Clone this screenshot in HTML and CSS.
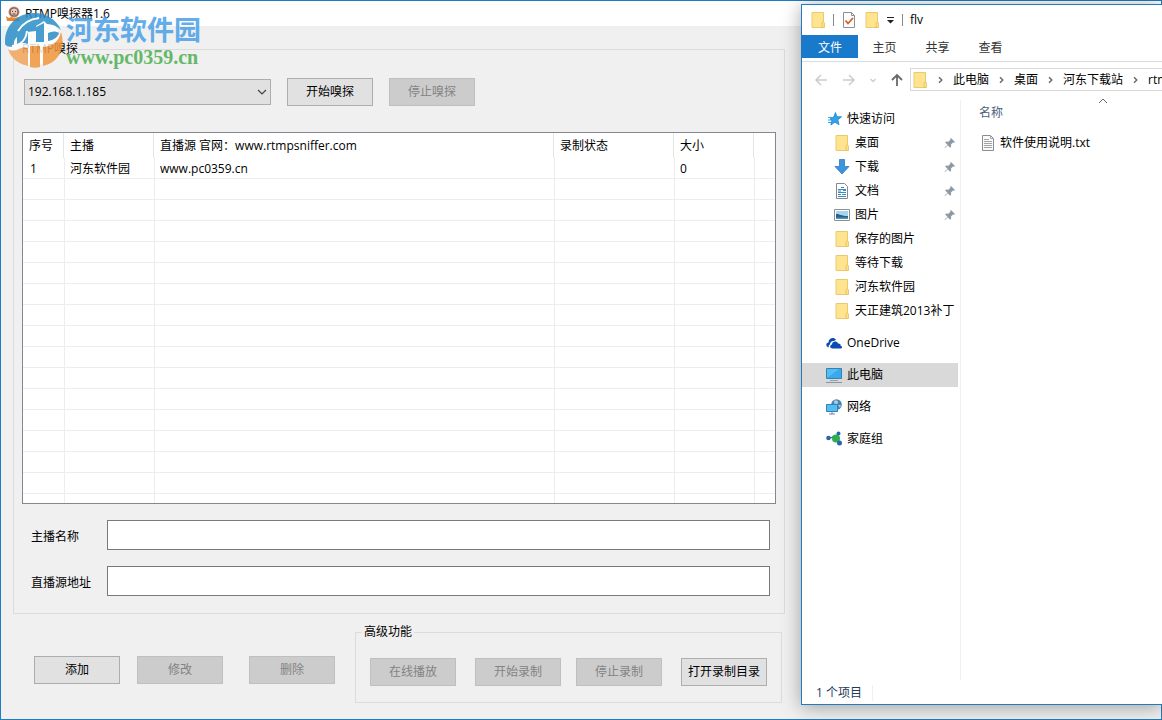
FILE: index.html
```html
<!DOCTYPE html>
<html lang="zh-CN">
<head>
    <meta charset="UTF-8">
    <meta name="viewport" content="width=device-width, initial-scale=1.0">
    <title>RTMP嗅探器1.6</title>
    <link rel="stylesheet" href="styles.css">
</head>
<body>

    <!-- shared icons -->
    <svg class="sprite" aria-hidden="true">
        <symbol id="folder" viewBox="0 0 16 16">
            <path d="M2 .5h11.500v15H2z" fill="#ffe48f" stroke="#ecc96f"/>
            <path d="M12 15.500v-4.500l1.200-1.500 1.300 1.500v4.500z" fill="#ffe08a" stroke="#e6bf58" stroke-width=".8"/>
        </symbol>
        <symbol id="pin" viewBox="0 0 12 12">
            <path d="M7 1l4 4-1 .8-1-.2-2 2 .1 2.200-1 .9-2.300-2.400L1 11l-.4-.4 2.900-2.900L1.200 5.500l.9-.9 2.300.1 2-2L6.200 1.700z" fill="#8e9aa3"/>
        </symbol>
        <symbol id="chevron" viewBox="0 0 5 8">
            <path d="M1 1.200L3.800 4 1 6.800" fill="none" stroke="#666" stroke-width="1.400"/>
        </symbol>
    </svg>

    <div class="window sniffer">
        <header class="titlebar">
            <svg class="app-icon" viewBox="0 0 16 16">
                <circle cx="9" cy="6" r="5.500" fill="#d98a4f"/>
                <circle cx="9" cy="6" r="4" fill="#f1c9a4" stroke="#5b5f8e" stroke-width="1.200"/>
                <path d="M7 5.500h1M10 5.500h1M7.500 8h3" stroke="#5b3a3a"/>
                <path d="M1 10l3 2 2-1 3 1 5-1 1 4H2z" fill="#e8862f"/>
            </svg>
            <span>RTMP嗅探器1.6</span>
        </header>

        <main class="panel">
            <fieldset class="group sniff-group">
                <legend>RTMP嗅探</legend>
                <div class="toolbar">
                    <div class="combo">
                        <select aria-label="网卡地址">
                            <option>192.168.1.185</option>
                        </select>
                        <svg viewBox="0 0 10 6"><path d="M1 1l4 4 4-4" fill="none" stroke="#444" stroke-width="1.200"/></svg>
                    </div>
                    <button type="button">开始嗅探</button>
                    <button type="button" disabled>停止嗅探</button>
                </div>

                <div class="list-view">
                    <table>
                        <colgroup>
                            <col class="col-no"><col class="col-name"><col class="col-url"><col class="col-state"><col class="col-size"><col>
                        </colgroup>
                        <thead>
                            <tr><th>序号</th><th>主播</th><th>直播源 官网：www.rtmpsniffer.com</th><th>录制状态</th><th>大小</th><th></th></tr>
                        </thead>
                        <tbody>
                            <tr><td>1</td><td>河东软件园</td><td>www.pc0359.cn</td><td></td><td>0</td><td></td></tr>
                            <tr><td></td><td></td><td></td><td></td><td></td><td></td></tr>
                            <tr><td></td><td></td><td></td><td></td><td></td><td></td></tr>
                            <tr><td></td><td></td><td></td><td></td><td></td><td></td></tr>
                            <tr><td></td><td></td><td></td><td></td><td></td><td></td></tr>
                            <tr><td></td><td></td><td></td><td></td><td></td><td></td></tr>
                            <tr><td></td><td></td><td></td><td></td><td></td><td></td></tr>
                            <tr><td></td><td></td><td></td><td></td><td></td><td></td></tr>
                            <tr><td></td><td></td><td></td><td></td><td></td><td></td></tr>
                            <tr><td></td><td></td><td></td><td></td><td></td><td></td></tr>
                            <tr><td></td><td></td><td></td><td></td><td></td><td></td></tr>
                            <tr><td></td><td></td><td></td><td></td><td></td><td></td></tr>
                            <tr><td></td><td></td><td></td><td></td><td></td><td></td></tr>
                            <tr><td></td><td></td><td></td><td></td><td></td><td></td></tr>
                            <tr><td></td><td></td><td></td><td></td><td></td><td></td></tr>
                            <tr><td></td><td></td><td></td><td></td><td></td><td></td></tr>
                            <tr><td></td><td></td><td></td><td></td><td></td><td></td></tr>
                        </tbody>
                    </table>
                </div>

                <div class="field">
                    <label for="anchorName">主播名称</label>
                    <input type="text" id="anchorName">
                </div>
                <div class="field">
                    <label for="sourceUrl">直播源地址</label>
                    <input type="text" id="sourceUrl">
                </div>
            </fieldset>

            <div class="bottom">
                <div class="edit-buttons">
                    <div class="pair">
                        <button type="button">添加</button>
                        <button type="button" disabled>修改</button>
                    </div>
                    <button type="button" disabled>删除</button>
                </div>
                <fieldset class="group advanced">
                    <legend>高级功能</legend>
                    <div class="advanced-buttons">
                        <div class="pair">
                            <button type="button" disabled>在线播放</button>
                            <button type="button" disabled>开始录制</button>
                        </div>
                        <div class="pair">
                            <button type="button" disabled>停止录制</button>
                            <button type="button">打开录制目录</button>
                        </div>
                    </div>
                </fieldset>
            </div>
        </main>
    </div>

    <div class="watermark">
        <svg viewBox="0 0 58 56">
            <circle cx="28.500" cy="28" r="26" fill="#fff"/>
            <path d="M0 32C-1 14 12 1 29 1c12 0 22 6 27 17-4-4-9-6-14-6l-3-3-8 5v5l-9 1c-9 2-14 7-13 14-5 2-8 0-9-2z" fill="#2b8fc9"/>
            <path d="M12 21l11-2v13c-4-2-8-1-11 1zM31 15l8-4v19h-8zM43 21c4-2 8-2 11 0-1 4-5 7-11 8z" fill="#2b8fc9"/>
            <path d="M3 37c3 2 7 2 11 0s6-2 9-1v18C13 52 6 46 3 37z" fill="#f2a65a"/>
            <path d="M25 34h10v21c-3 1-7 1-10 0z" fill="#f2963c"/>
            <path d="M38 35c10-1 16-6 18-15 5 16-2 30-18 34z" fill="#f2963c"/>
            <path d="M13 19c5-8 12-12 21-13M7 34c9-1 14-6 15-15" fill="none" stroke="#fff" stroke-width="2"/>
        </svg>
        <div class="watermark-text">
            <strong>河东软件园</strong>
            <span>www.pc0359.cn</span>
        </div>
    </div>

    <div class="window explorer">
        <header class="quickbar">
            <svg class="icon"><use href="#folder"/></svg>
            <i class="sep"></i>
            <svg class="icon" viewBox="0 0 16 16">
                <path d="M2.500 .5h8l3 3v12h-11z" fill="#fff" stroke="#8b8f96"/>
                <path d="M10.500 .5v3h3" fill="none" stroke="#8b8f96"/>
                <path d="M4.500 8.500l2.500 3 5-5.500" fill="none" stroke="#dc5a2c" stroke-width="1.800"/>
            </svg>
            <svg class="icon"><use href="#folder"/></svg>
            <svg class="more" viewBox="0 0 8 8"><path d="M0 1.500h7" stroke="#222"/><path d="M0 4h7L3.500 7.500z" fill="#222"/></svg>
            <i class="sep"></i>
            <span>flv</span>
        </header>
        <div class="tabs">
            <button type="button" class="tab file-tab">文件</button>
            <button type="button" class="tab">主页</button>
            <button type="button" class="tab">共享</button>
            <button type="button" class="tab">查看</button>
        </div>
        <div class="address-row">
            <div class="history">
                <svg viewBox="0 0 14 14"><path d="M13 7H2M7 2L2 7l5 5" fill="none" stroke="#ccc" stroke-width="1.500"/></svg>
                <svg viewBox="0 0 14 14"><path d="M1 7h11M7 2l5 5-5 5" fill="none" stroke="#ccc" stroke-width="1.500"/></svg>
                <svg class="small" viewBox="0 0 6 14"><path d="M.5 6L3 8.500 5.500 6" fill="none" stroke="#ccc" stroke-width="1.300"/></svg>
                <svg viewBox="0 0 14 14"><path d="M7 13V2M2 7l5-5 5 5" fill="none" stroke="#686868" stroke-width="1.800"/></svg>
            </div>
            <nav class="address">
                <svg class="icon"><use href="#folder"/></svg>
                <svg class="chevron"><use href="#chevron"/></svg>
                <a href="#">此电脑</a>
                <svg class="chevron"><use href="#chevron"/></svg>
                <a href="#">桌面</a>
                <svg class="chevron"><use href="#chevron"/></svg>
                <a href="#">河东下载站</a>
                <svg class="chevron"><use href="#chevron"/></svg>
                <a href="#">rtm</a>
            </nav>
        </div>

        <div class="explorer-body">
            <nav class="tree">
                <section>
                    <a href="#">
                        <svg class="icon" viewBox="0 0 16 16"><path d="M9.500 1.500l1.300 4.200 4.700.1-3.700 3 1.200 4.900-4.100-2.600-4 2.900 1-4.500-1.900-1.500 3.700-2z" fill="#2fa3ec" stroke="#1b7fcb" stroke-width=".8"/><path d="M2 6.500h4M2 9h3M2 11.500h3" stroke="#2fa3ec"/></svg>
                        快速访问
                    </a>
                    <a href="#" class="child"><svg class="icon"><use href="#folder"/></svg>桌面<svg class="pin"><use href="#pin"/></svg></a>
                    <a href="#" class="child">
                        <svg class="icon" viewBox="0 0 16 16"><path d="M5.500 .5h5v7h4.500L8 15 1 7.500h4.500z" fill="#3e94dc" stroke="#2a7cc7" stroke-width=".8"/></svg>
                        下载<svg class="pin"><use href="#pin"/></svg>
                    </a>
                    <a href="#" class="child">
                        <svg class="icon" viewBox="0 0 16 16"><path d="M2.500 .5h8l3 3v12h-11z" fill="#fff" stroke="#84898e"/><path d="M4 6.500h8M4 9.500h8M4 11.500h3M8 11.500h4M4 13.500h8M7 4.500h3M4 8h3M9 7.500h3" stroke="#398bc4"/></svg>
                        文档<svg class="pin"><use href="#pin"/></svg>
                    </a>
                    <a href="#" class="child">
                        <svg class="icon" viewBox="0 0 16 16"><path d="M.5 2.500h15v11H.5z" fill="#fff" stroke="#8b9095"/><path d="M2 4h12v8H2z" fill="#a9d4f1"/><path d="M2 7c4 0 5 2 12 2v3H2z" fill="#2d5f80"/><path d="M2 10.500h12V12H2z" fill="#4997c5"/></svg>
                        图片<svg class="pin"><use href="#pin"/></svg>
                    </a>
                    <a href="#" class="child"><svg class="icon"><use href="#folder"/></svg>保存的图片</a>
                    <a href="#" class="child"><svg class="icon"><use href="#folder"/></svg>等待下载</a>
                    <a href="#" class="child"><svg class="icon"><use href="#folder"/></svg>河东软件园</a>
                    <a href="#" class="child"><svg class="icon"><use href="#folder"/></svg>天正建筑2013补丁</a>
                </section>
                <section>
                    <a href="#">
                        <svg class="icon" viewBox="0 0 16 16"><path d="M3 12.500C-.5 12-.5 8 2.500 7.500 2.500 3 8 1.500 10 5L7.500 6C5 6 4 8 4 9.500 2.500 10 2.500 11.500 3 12.500z" fill="#0a4ab2"/><path d="M6.500 13.500c-3 0-3-3.500-.5-4C6 6 11 5.500 12 8.500c2-.3 3 1 2.500 2.200 2 .3 2 2.800 0 2.800z" fill="#0a4ab2"/></svg>
                        OneDrive
                    </a>
                </section>
                <section>
                    <a href="#" class="selected">
                        <svg class="icon" viewBox="0 0 16 16"><path d="M.5 1.500h15v10H.5z" fill="#55bdf5" stroke="#3880ad"/><path d="M1 11L13 2h2v9z" fill="#38a9ec"/><path d="M4 13.500h8" stroke="#8fa3b0"/><path d="M0 15.500h16" stroke="#8497a5"/></svg>
                        此电脑
                    </a>
                </section>
                <section>
                    <a href="#">
                        <svg class="icon" viewBox="0 0 16 16"><circle cx="10.500" cy="5.500" r="5.300" fill="#4584b5"/><path d="M8 2c2-2 5 0 4 2s-3 1-4 0zM12 6l3 0-1 3z" fill="#a7cbdc"/><path d="M.5 5.500h11v7H.5z" fill="#55bdf5" stroke="#3880ad"/><path d="M3 15h6M6 13v2" stroke="#6e8797"/></svg>
                        网络
                    </a>
                </section>
                <section>
                    <a href="#">
                        <svg class="icon" viewBox="0 0 16 16"><path d="M3 7l6 0 4-4M9 8l5 5" stroke="#8fc3a5"/><circle cx="10" cy="7.500" r="4" fill="#2fae4e"/><circle cx="2.500" cy="7" r="2.300" fill="#2767ae"/><circle cx="12.500" cy="2.500" r="2" fill="#2767ae"/><circle cx="13.500" cy="12" r="2.500" fill="#2767ae"/></svg>
                        家庭组
                    </a>
                </section>
            </nav>
            <div class="files">
                <div class="column-head">
                    名称
                    <svg class="sort" viewBox="0 0 10 6"><path d="M1 5l4-4 4 4" fill="none" stroke="#666"/></svg>
                </div>
                <a href="#" class="file">
                    <svg class="icon" viewBox="0 0 16 16"><path d="M2.500 .5h8l3 3v12h-11z" fill="#fafafa" stroke="#8d8d8d"/><path d="M10.500 .5v3h3M4 4.500h5M4 6.500h8M4 8.500h8M4 10.500h8M4 12.500h8" fill="none" stroke="#a3a3a3"/></svg>
                    软件使用说明.txt
                </a>
            </div>
        </div>
        <footer class="status">
            <span>1 个项目</span>
        </footer>
    </div>

</body>
</html>
```
FILE: styles.css
```css
* {
    box-sizing: border-box;
}
body {
    margin: 0;
    height: 100vh;
    overflow: hidden;
    position: relative;
    background-color: #f0f0f0;
    color: #000;
    font-family: "Open Sans", "Noto Sans CJK SC", sans-serif;
    font-size: 12px;
    line-height: 16px;
}
a {
    color: inherit;
    text-decoration: none;
}
svg {
    display: block;
    flex: none;
}
.sprite {
    position: absolute;
    width: 0;
    height: 0;
}
.icon {
    width: 16px;
    height: 16px;
}
.window {
    display: flex;
    flex-direction: column;
    border: 1px solid #1f7cc0;
}

/* sniffer window */
.sniffer {
    height: 100vh;
    background-color: #f0f0f0;
}
.titlebar {
    display: flex;
    align-items: center;
    gap: 4px;
    height: 25px;
    padding-left: 4px;
    background-color: #fff;
}
.app-icon {
    width: 16px;
    height: 16px;
}
.panel {
    flex: 1;
    min-height: 0;
    display: flex;
    flex-direction: column;
    gap: 10px;
    padding: 15px 376px 16px 12px;
}
.group {
    min-width: 0;
    margin: 0;
    padding: 0 6px;
    border: 1px solid #dcdcdc;
}
.group legend {
    padding: 0 2px;
}
.sniff-group {
    flex: 1;
    min-height: 0;
    display: flex;
    flex-direction: column;
    padding: 21px 8px 17px;
}
.sniff-group legend {
    padding: 0;
}
.toolbar {
    display: flex;
    align-items: center;
    gap: 16px;
    padding-left: 2px;
    margin-bottom: 26px;
}
.combo {
    position: relative;
    width: 247px;
}
.combo select {
    display: block;
    appearance: none;
    width: 100%;
    height: 26px;
    padding: 0 3px;
    border: 1px solid #adadad;
    border-radius: 0;
    background-color: #e1e1e1;
    color: #000;
    font: inherit;
}
.combo svg {
    position: absolute;
    top: 10px;
    right: 4px;
    width: 10px;
    height: 6px;
    pointer-events: none;
}
.sniffer button {
    width: 86px;
    height: 28px;
    padding: 0;
    border: 1px solid #adadad;
    background-color: #e1e1e1;
    color: #000;
    font: inherit;
}
.sniffer button:disabled {
    border-color: #bfbfbf;
    background-color: #ccc;
    color: #838383;
}
.list-view {
    flex: 1;
    min-height: 0;
    overflow: hidden;
    border: 1px solid #828790;
    background-color: #fff;
}
.list-view table {
    width: 100%;
    table-layout: fixed;
    border-collapse: separate;
    border-spacing: 0;
}
.col-no {
    width: 41px;
}
.col-name {
    width: 90px;
}
.col-url {
    width: 400px;
}
.col-state {
    width: 120px;
}
.col-size {
    width: 80px;
}
.list-view th {
    height: 25px;
    padding: 0 6px;
    border-right: 1px solid #e5e5e5;
    text-align: left;
    font-weight: normal;
}
.list-view td {
    height: 21px;
    padding: 2px 5px 0;
    border-left: 1px solid #ededed;
    border-bottom: 1px solid #ededed;
}
.list-view th:last-child {
    border-right: 0;
}
.list-view td:first-child {
    border-left: 0;
    padding-left: 7px;
}
.field {
    display: flex;
    align-items: center;
    margin: 16px 6px 0 9px;
}
.field label {
    width: 76px;
    padding-top: 4px;
}
.field input {
    flex: 1;
    min-width: 0;
    height: 30px;
    padding: 0 6px;
    border: 1px solid #7a7a7a;
    background-color: #fff;
    font: inherit;
}
.bottom {
    display: flex;
    align-items: flex-end;
    gap: 20px;
    padding: 0 3px 0 21px;
}
.edit-buttons {
    display: flex;
    gap: 26px;
    padding-bottom: 19px;
}
.pair {
    display: flex;
    gap: 17px;
}
.advanced {
    flex: 1;
}
.advanced-buttons {
    display: flex;
    justify-content: space-between;
    padding: 18px 8px 16px;
}
.advanced .pair {
    gap: 19px;
}

/* watermark over the title bar */
.watermark {
    position: absolute;
    top: 12px;
    left: 5px;
    display: flex;
    gap: 3px;
    opacity: 0.85;
    pointer-events: none;
}
.watermark svg {
    width: 58px;
    height: 56px;
}
.watermark-text {
    display: flex;
    flex-direction: column;
}
.watermark strong {
    color: #4a9fe8;
    font-size: 27px;
    line-height: 35px;
}
.watermark span {
    color: #4caf50;
    font-family: "Liberation Serif", serif;
    font-size: 20px;
    font-weight: bold;
    line-height: 20px;
}

/* file explorer window */
.explorer {
    position: absolute;
    top: 4px;
    right: 0;
    bottom: 15px;
    width: 361px;
    border-right: 0;
    overflow: hidden;
    background-color: #fff;
    box-shadow: 0 2px 18px rgba(0, 0, 0, 0.35);
}
.quickbar {
    display: flex;
    align-items: center;
    gap: 7px;
    height: 30px;
    padding-left: 8px;
}
.sep {
    width: 1px;
    height: 12px;
    background-color: #888;
}
.more {
    width: 8px;
    height: 8px;
}
.tabs {
    display: flex;
    height: 27px;
    padding-bottom: 3px;
    border-bottom: 1px solid #dadbdc;
}
.tab {
    width: 53px;
    padding: 2px 0 0;
    border: 0;
    background: none;
    color: #333;
    font: inherit;
}
.file-tab {
    width: 56px;
    background-color: #1979ca;
    color: #fff;
}
.address-row {
    display: flex;
    align-items: center;
    gap: 6px;
    height: 35px;
    padding-left: 12px;
}
.history {
    display: flex;
    align-items: center;
    gap: 14px;
}
.history svg {
    width: 14px;
    height: 14px;
}
.history .small {
    width: 6px;
}
.address {
    flex: 1;
    min-width: 0;
    display: flex;
    align-items: center;
    gap: 10px;
    height: 23px;
    padding-left: 1px;
    border: 1px solid #d9d9d9;
    border-right: 0;
    overflow: hidden;
    white-space: nowrap;
}
.chevron {
    width: 5px;
    height: 8px;
}
.explorer-body {
    flex: 1;
    min-height: 0;
    display: flex;
}
.tree {
    width: 159px;
    margin-top: 3px;
    padding: 7px 2px 0 0;
    border-right: 1px solid #f0f0f0;
}
.tree section {
    margin-bottom: 8px;
}
.tree a {
    display: flex;
    align-items: center;
    gap: 5px;
    height: 24px;
    padding: 0 2px 0 24px;
    white-space: nowrap;
}
.tree .child {
    padding-left: 32px;
}
.tree .selected {
    background-color: #d9d9d9;
}
.pin {
    width: 12px;
    height: 12px;
    margin-left: auto;
}
.files {
    flex: 1;
    min-width: 0;
    padding-left: 12px;
}
.column-head {
    position: relative;
    width: 260px;
    height: 31px;
    padding: 8px 6px;
    color: #4c607a;
}
.sort {
    position: absolute;
    top: 1px;
    left: 125px;
    width: 10px;
    height: 6px;
}
.file {
    display: flex;
    align-items: center;
    gap: 4px;
    height: 24px;
    margin-top: 3px;
    padding-left: 7px;
}
.status {
    display: flex;
    align-items: center;
    height: 24px;
    padding: 2px 0 0 14px;
    color: #1e395b;
}
.status span {
    padding-right: 10px;
    border-right: 1px solid #f0f0f0;
}
```
